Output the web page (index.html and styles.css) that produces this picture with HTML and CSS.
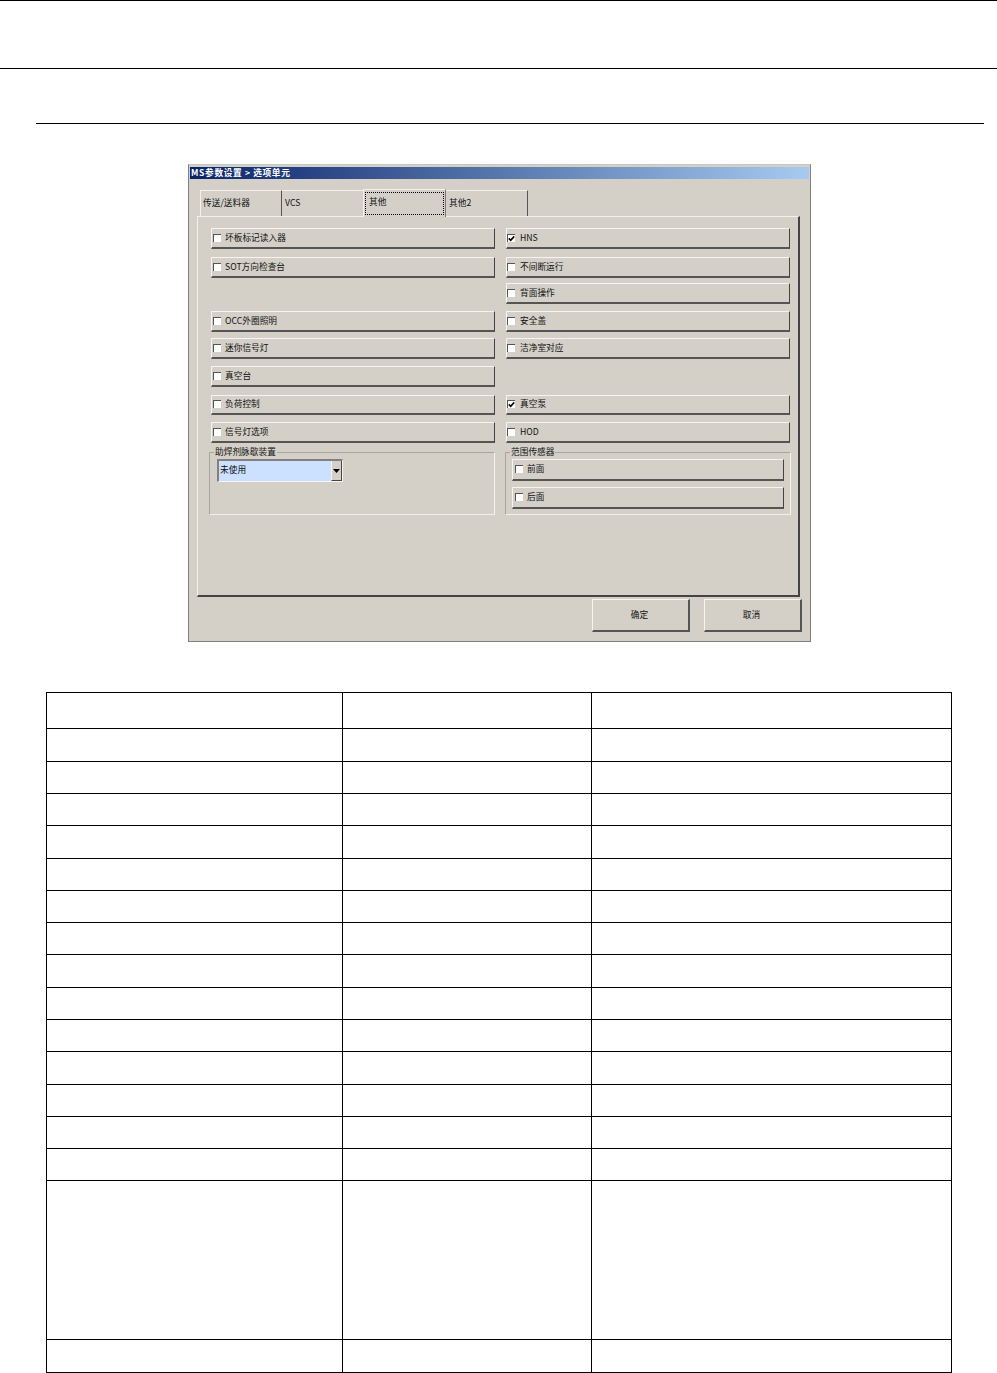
FILE: index.html
```html
<!DOCTYPE html>
<html lang="zh-CN">
<head>
<meta charset="utf-8">
<title>MS参数设置</title>
<link rel="stylesheet" href="styles.css">
</head>
<body>
<div class="rule rule-top"></div>
<div class="rule rule-second"></div>
<div class="rule rule-third"></div>

<section class="dialog">
  <div class="titlebar">MS参数设置 &gt; 选项单元</div>
  <div class="tabs">
    <div class="tab tab-first">传送/送料器</div>
    <div class="tab">VCS</div>
    <div class="tab tab-active"><span class="focus">其他</span></div>
    <div class="tab tab-last">其他2</div>
  </div>
  <div class="panel">
    <div class="col col-left">
      <label class="opt"><i class="box"></i>坏板标记读入器</label>
      <label class="opt gap-8"><i class="box"></i>SOT方向检查台</label>
      <label class="opt gap-33"><i class="box"></i>OCC外圈照明</label>
      <label class="opt gap-6"><i class="box"></i>迷你信号灯</label>
      <label class="opt gap-7"><i class="box"></i>真空台</label>
      <label class="opt opt-short gap-8"><i class="box"></i>负荷控制</label>
      <label class="opt gap-7"><i class="box"></i>信号灯选项</label>
      <div class="group gap-9">
        <span class="legend">助焊剂脉歇装置</span>
        <div class="combo">
          <span class="combo-value">未使用</span>
          <span class="combo-btn"><svg width="7" height="4" viewBox="0 0 7 4"><path d="M0 0h7L3.5 4z" fill="#000"/></svg></span>
        </div>
      </div>
    </div>
    <div class="col col-right">
      <label class="opt"><i class="box"><svg width="7" height="7" viewBox="0 0 7 7"><path d="M.8 3.4 2.7 5.4 6.2 1.4" fill="none" stroke="#000" stroke-width="1.6"/></svg></i>HNS</label>
      <label class="opt gap-8"><i class="box"></i>不间断运行</label>
      <label class="opt gap-5"><i class="box"></i>背面操作</label>
      <label class="opt gap-7"><i class="box"></i>安全盖</label>
      <label class="opt gap-6"><i class="box"></i>洁净室对应</label>
      <label class="opt opt-short gap-36"><i class="box"><svg width="7" height="7" viewBox="0 0 7 7"><path d="M.8 3.4 2.7 5.4 6.2 1.4" fill="none" stroke="#000" stroke-width="1.6"/></svg></i>真空泵</label>
      <label class="opt gap-7"><i class="box"></i>HOD</label>
      <div class="group group-right gap-9">
        <span class="legend">范围传感器</span>
        <label class="opt opt-inner"><i class="box"></i>前面</label>
        <label class="opt opt-inner gap-6"><i class="box"></i>后面</label>
      </div>
    </div>
  </div>
  <div class="actions">
    <button class="btn">确定</button>
    <button class="btn">取消</button>
  </div>
</section>

<table class="grid">
  <colgroup><col class="c1"><col class="c2"><col class="c3"></colgroup>
  <tbody>
    <tr class="h36"><td></td><td></td><td></td></tr>
    <tr class="h33"><td></td><td></td><td></td></tr>
    <tr class="h32"><td></td><td></td><td></td></tr>
    <tr class="h32"><td></td><td></td><td></td></tr>
    <tr class="h33"><td></td><td></td><td></td></tr>
    <tr class="h32"><td></td><td></td><td></td></tr>
    <tr class="h32"><td></td><td></td><td></td></tr>
    <tr class="h32"><td></td><td></td><td></td></tr>
    <tr class="h33"><td></td><td></td><td></td></tr>
    <tr class="h32"><td></td><td></td><td></td></tr>
    <tr class="h32"><td></td><td></td><td></td></tr>
    <tr class="h33"><td></td><td></td><td></td></tr>
    <tr class="h32"><td></td><td></td><td></td></tr>
    <tr class="h32"><td></td><td></td><td></td></tr>
    <tr class="h32"><td></td><td></td><td></td></tr>
    <tr class="h159"><td></td><td></td><td></td></tr>
    <tr class="h33"><td></td><td></td><td></td></tr>
  </tbody>
</table>
</body>
</html>
```

FILE: styles.css
```css
html, body { margin: 0; padding: 0; background: #fff; }
body { width: 997px; height: 1373px; overflow: hidden; font-family: "Noto Sans CJK SC", "Liberation Sans", sans-serif; }

.rule { height: 1px; background: #000; }
.rule-second { margin-top: 67px; }
.rule-third { margin: 54px 13px 0 36px; }

.dialog {
  box-sizing: border-box;
  width: 623px;
  height: 478px;
  margin: 40px 0 0 188px;
  padding: 2px 1px 0 1px;
  background: #d4d0c8;
  border: 1px solid #808080;
  border-top-color: #c8c6c0;
  display: flex;
  flex-direction: column;
  font-size: 8.7px;
  line-height: 12px;
  color: #111;
}
.titlebar {
  height: 12px;
  padding-left: 1px;
  background: linear-gradient(90deg, #0a246a, #a6caf0);
  color: #fff;
  font-weight: 700;
  font-size: 8.7px;
  letter-spacing: .62px;
  white-space: nowrap;
}
.tabs { display: flex; height: 26px; margin: 11px 0 0 10px; align-items: flex-end; }
.tab {
  box-sizing: border-box;
  width: 82px;
  height: 26px;
  padding: 6px 0 0 3px;
  border-top: 1px solid #f2f1ed;
  border-right: 1px solid #555;
}
.tab-first { border-left: 1px solid #f2f1ed; padding-left: 2px; }
.tab-active {
  width: 83px;
  height: 28px;
  margin: -2px 0 -1px -1px;
  padding: 2px 1px 2px 1px;
  background: #d4d0c8;
  border-left: 1px solid #f2f1ed;
  border-right: 1px solid #777;
  position: relative;
  z-index: 1;
}
.focus { display: block; height: 100%; box-sizing: border-box; padding: 3px 0 0 3px; border: 1px dotted #000; }
.tab-last { padding-left: 3px; }

.panel {
  box-sizing: border-box;
  width: 603px;
  height: 381px;
  margin-left: 7px;
  padding: 11px 0 0 11px;
  border-top: 1px solid #f2f1ed;
  border-left: 1px solid #f2f1ed;
  border-right: 2px solid #444;
  border-bottom: 2px solid #444;
  display: flex;
  gap: 10px;
}
.col { width: 286px; display: flex; flex-direction: column; }
.opt {
  box-sizing: border-box;
  height: 21px;
  flex: none;
  display: flex;
  align-items: center;
  background: #d4d0c8;
  border-top: 1px solid #f5f4f0;
  border-left: 1px solid #f5f4f0;
  border-right: 1px solid #444;
  border-bottom: 2px solid #555;
}
.opt-short { height: 20px; padding-bottom: 1px; }
.col-left > .opt { margin-left: 2px; width: 284px; }
.col-right > .opt { margin-left: 1px; width: 284px; }
.box {
  box-sizing: border-box;
  width: 8px;
  height: 8px;
  margin: 0 4px 0 1px;
  background: #fff;
  border-top: 1px solid #555;
  border-left: 1px solid #555;
  display: flex;
  align-items: center;
  justify-content: center;
  flex: none;
}
.box svg { display: block; flex: none; }
.col-right > .opt > .box { margin: 0 5px 0 0; }
.opt-inner > .box { margin: 0 4px 0 2px; }

.gap-5 { margin-top: 5px; }
.gap-6 { margin-top: 6px; }
.gap-7 { margin-top: 7px; }
.gap-8 { margin-top: 8px; }
.gap-9 { margin-top: 9px; }
.gap-33 { margin-top: 33px; }
.gap-36 { margin-top: 36px; }

.group {
  box-sizing: border-box;
  position: relative;
  width: 286px;
  height: 63px;
  padding: 6px 0 0 7px;
  border: 1px solid #a9a69f;
  border-right-color: #f5f4f0;
  border-bottom-color: #f0efea;
}
.group-right { padding-left: 6px; }
.legend {
  position: absolute;
  top: -7px;
  left: 4px;
  padding: 0 1px;
  background: #d4d0c8;
}
.opt-inner { width: 272px; height: 22px; padding-bottom: 2px; }
.combo { width: 126px; height: 23px; box-sizing: border-box; display: flex; border-top: 2px solid #808080; border-left: 2px solid #808080; border-bottom: 1px solid #f5f4f0; border-right: 1px solid #f5f4f0; }
.combo-value { flex: 1; background: #cce0ff; padding: 3px 0 0 1px; }
.combo-btn {
  width: 11px;
  box-sizing: border-box;
  border-left: 1px solid #f5f4f0;
  border-right: 1px solid #444;
  border-bottom: 1px solid #444;
  display: flex;
  align-items: center;
  justify-content: center;
}

.actions { display: flex; justify-content: flex-end; gap: 14px; margin: 2px 7px 0 0; }
.btn {
  box-sizing: border-box;
  width: 98px;
  height: 33px;
  padding: 0 2px 0 0;
  font: inherit;
  color: inherit;
  background: #d4d0c8;
  border-style: solid;
  border-width: 1px 2px 2px 1px;
  border-color: #f5f4f0 #555 #555 #f5f4f0;
}

.grid {
  border-collapse: collapse;
  table-layout: fixed;
  width: 906px;
  margin: 50px 0 0 46px;
}
.c1 { width: 296px; }
.c2 { width: 249px; }
.c3 { width: 360px; }
.grid td { border: 1px solid #000; padding: 0; }
.h36 { height: 36px; }
.h33 { height: 33px; }
.h32 { height: 32px; }
.h159 { height: 159px; }
```
